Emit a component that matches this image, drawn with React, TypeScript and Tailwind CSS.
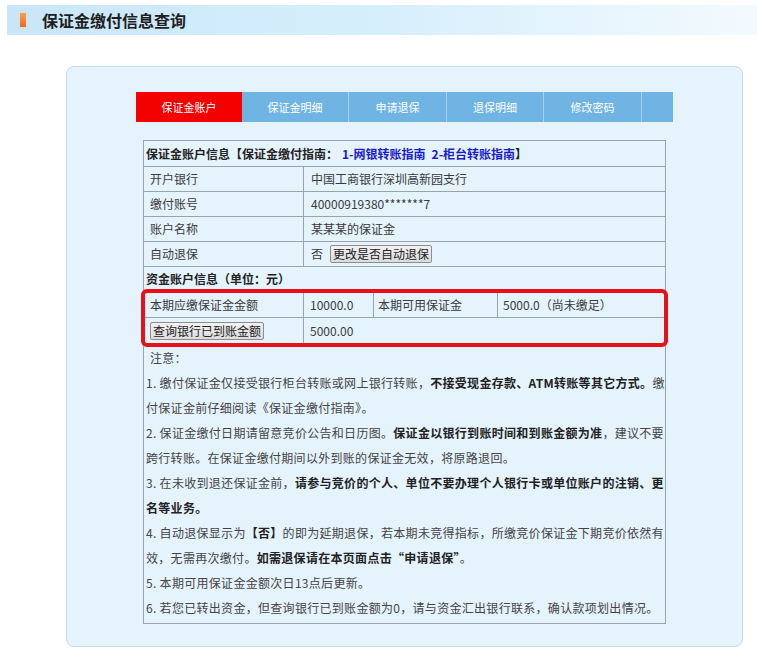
import React from "react";

const font = { fontFamily: '"Noto Sans CJK SC", "Noto Sans", sans-serif' };

const tabs = [
  { label: "保证金账户", w: "w-[106px]", active: true },
  { label: "保证金明细", w: "w-[107px]", active: false },
  { label: "申请退保", w: "w-[98px]", active: false },
  { label: "退保明细", w: "w-[97px]", active: false },
  { label: "修改密码", w: "w-[98px]", active: false },
];

function Btn({ children }: { children: React.ReactNode }) {
  return (
    <button className="h-[18px] px-[2px] border border-[#8d8d8d] rounded-[2px] bg-gradient-to-b from-[#f2f2f2] to-[#dcdcdc] text-[12px] leading-none text-[#222]">
      {children}
    </button>
  );
}

export default function App() {
  return (
    <div className="min-h-[654px] w-[757px] bg-white pt-[5px] text-[#333]" style={font}>
      <div className="ml-[7px] h-[30px] flex items-center bg-gradient-to-r from-[#c9e6f8] via-[#d6effc] to-[#f3fafe]">
        <div className="ml-[13px] w-[6px] h-[14px] bg-gradient-to-b from-[#ffa04a] to-[#ee6a10]" />
        <h1 className="ml-[16px] text-[16px] font-bold text-[#1e1e1e]">保证金缴付信息查询</h1>
      </div>

      <div className="mt-[31px] ml-[66px] w-[677px] h-[581px] rounded-[8px] border border-[#c6dcea] bg-[#e5f3fc] flex flex-col items-center pt-[25px]">
        <div className="w-[537px] h-[30px] flex bg-[#6fb4e3]">
          {tabs.map((t) => (
            <div
              key={t.label}
              className={`${t.w} h-full flex items-center justify-center text-[11px] text-white border-r border-[#a8d2ef] ${
                t.active ? "bg-[#f40000] border-r-0" : ""
              }`}
            >
              {t.label}
            </div>
          ))}
          <div className="flex-1" />
        </div>

        <div className="mt-[18px] w-[523px] border border-[#9aa3a8] text-[12px] text-[#3a3a3a]">
          <div className="h-[26px] flex items-center px-[2px] font-bold border-b border-[#9aa3a8] text-[#222]">
            保证金账户信息【保证金缴付指南：
            <span className="text-[#1a1ad0] ml-[4px]">1-网银转账指南</span>
            <span className="text-[#1a1ad0] ml-[6px]">2-柜台转账指南</span>】
          </div>
          {[
            ["开户银行", "中国工商银行深圳高新园支行"],
            ["缴付账号", "40000919380*******7"],
            ["账户名称", "某某某的保证金"],
          ].map(([k, v]) => (
            <div key={k} className="h-[25px] grid grid-cols-[160px_1fr] border-b border-[#9aa3a8]">
              <div className="flex items-center px-[6px] border-r border-[#9aa3a8]">{k}</div>
              <div className="flex items-center px-[7px]">{v}</div>
            </div>
          ))}
          <div className="h-[25px] grid grid-cols-[160px_1fr] border-b border-[#9aa3a8]">
            <div className="flex items-center px-[6px] border-r border-[#9aa3a8]">自动退保</div>
            <div className="flex items-center px-[7px] gap-[7px]">
              <span>否</span>
              <Btn>更改是否自动退保</Btn>
            </div>
          </div>
          <div className="h-[25px] flex items-center px-[2px] font-bold text-[#222] border-b border-[#9aa3a8]">
            资金账户信息（单位：元）
          </div>

          <div className="relative z-10 rounded-[3px] outline-4 outline-[#e8101a] -outline-offset-1">
            <div className="h-[26px] grid grid-cols-[160px_70px_124px_1fr] border-b border-[#9aa3a8]">
              <div className="flex items-center px-[6px] border-r border-[#9aa3a8]">本期应缴保证金金额</div>
              <div className="flex items-center px-[6px] border-r border-[#9aa3a8]">10000.0</div>
              <div className="flex items-center px-[4px] border-r border-[#9aa3a8]">本期可用保证金</div>
              <div className="flex items-center px-[5px]">5000.0（尚未缴足）</div>
            </div>
            <div className="h-[26px] grid grid-cols-[160px_1fr] border-b border-[#9aa3a8]">
              <div className="flex items-center px-[6px] border-r border-[#9aa3a8]">
                <Btn>查询银行已到账金额</Btn>
              </div>
              <div className="flex items-center px-[6px]">5000.00</div>
            </div>
          </div>

          <div className="px-[2px] pt-[1px] pb-[3px] leading-[25px] whitespace-nowrap text-[#444] tracking-[0.3px]">
            <div className="pl-[4px]">注意：</div>
            <p>
              1. 缴付保证金仅接受银行柜台转账或网上银行转账，
              <b className="text-[#222]">不接受现金存款、ATM转账等其它方式。</b>缴
              <br />
              付保证金前仔细阅读《保证金缴付指南》。
            </p>
            <p>
              2. 保证金缴付日期请留意竞价公告和日历图。
              <b className="text-[#222]">保证金以银行到账时间和到账金额为准</b>，建议不要
              <br />
              跨行转账。在保证金缴付期间以外到账的保证金无效，将原路退回。
            </p>
            <p>
              3. 在未收到退还保证金前，
              <b className="text-[#222]">请参与竞价的个人、单位不要办理个人银行卡或单位账户的注销、更</b>
              <br />
              <b className="text-[#222]">名等业务。</b>
            </p>
            <p>
              4. 自动退保显示为<b className="text-[#222]">【否】</b>的即为延期退保，若本期未竞得指标，所缴竞价保证金下期竞价依然有
              <br />
              效，无需再次缴付。<b className="text-[#222]">如需退保请在本页面点击“申请退保”</b>。
            </p>
            <p>5. 本期可用保证金金额次日13点后更新。</p>
            <p>6. 若您已转出资金，但查询银行已到账金额为0，请与资金汇出银行联系，确认款项划出情况。</p>
          </div>
        </div>
      </div>
    </div>
  );
}
